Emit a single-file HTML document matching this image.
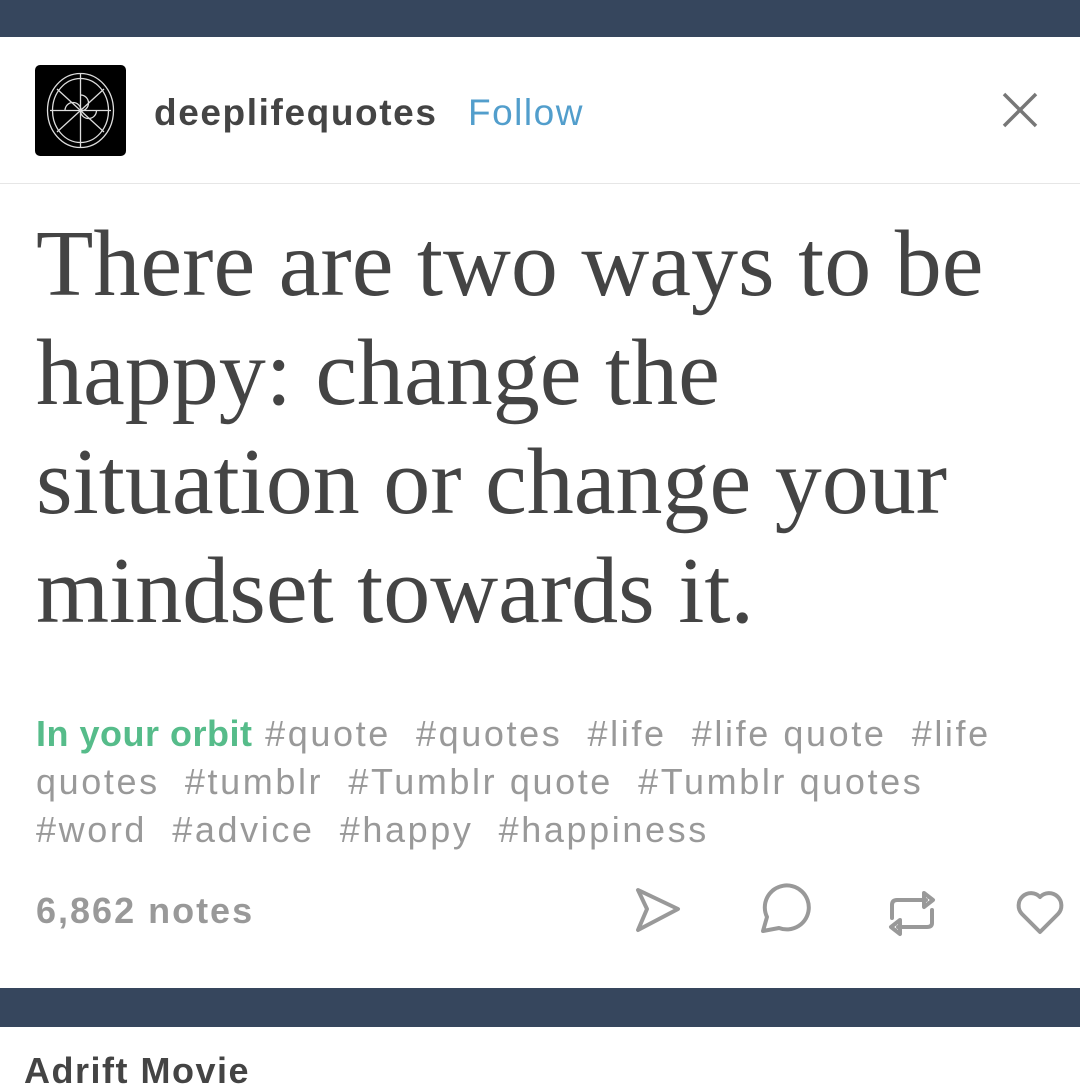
<!DOCTYPE html>
<html><head><meta charset="utf-8"><style>
body{margin:0;width:1080px;height:1080px;overflow:hidden;background:#fff;font-family:"Liberation Sans",sans-serif;position:relative}
.bar{position:absolute;left:0;width:1080px;background:#36465d}
.abs{position:absolute;white-space:nowrap}
</style></head><body>
<div class="bar" style="top:0;height:37px"></div>
<div class="abs" style="left:35px;top:65px;width:91px;height:91px;background:#000;border-radius:5px">
<svg width="91" height="91" viewBox="0 0 91 91" fill="none" stroke="#ddd" stroke-width="1.3">
<ellipse cx="45.5" cy="45.5" rx="33" ry="37"/><ellipse cx="45.5" cy="45.5" rx="28" ry="32"/>
<line x1="45.5" y1="8" x2="45.5" y2="83"/><line x1="15" y1="45.5" x2="76" y2="45.5"/>
<line x1="22" y1="24" x2="69" y2="67"/><line x1="69" y1="24" x2="22" y2="67"/>
<path d="M30 45.5a8 8 0 0 1 16 0M45.5 45.5a8 8 0 0 0 16 0M45.5 30a8 8 0 0 1 0 16"/>
</svg></div>
<div class="abs" style="left:154px;top:92px;font-size:37px;color:#444;font-weight:bold;letter-spacing:1.6px">deeplifequotes</div>
<div class="abs" style="left:468px;top:92px;font-size:37px;color:#529ecc;letter-spacing:1.5px">Follow</div>
<svg class="abs" style="left:1002px;top:92px" width="36" height="36" viewBox="0 0 36 36"><path d="M2 2L34 34M34 2L2 34" stroke="#777" stroke-width="3.5"/></svg>
<div class="abs" style="left:0;top:183px;width:1080px;height:1px;background:#e6e6e6"></div>
<div class="abs" style="left:36px;top:210px;font-family:'Liberation Serif',serif;font-size:94px;line-height:109px;color:#444">There are two ways to be<br>happy: change the<br>situation or change your<br>mindset towards it.</div>
<div class="abs" style="left:36px;top:710px;font-size:36px;line-height:48px;color:#999;letter-spacing:2.6px">
<span style="color:#56bc8a;font-weight:bold;letter-spacing:0.5px">In your orbit</span> #quote&nbsp; #quotes&nbsp; #life&nbsp; #life quote&nbsp; #life<br>quotes&nbsp; #tumblr&nbsp; #Tumblr quote&nbsp; #Tumblr quotes<br>#word&nbsp; #advice&nbsp; #happy&nbsp; #happiness</div>
<div class="abs" style="left:36px;top:890px;font-size:36px;color:#999;font-weight:bold;letter-spacing:2px">6,862 notes</div>
<svg class="abs" style="left:630px;top:883px" width="450" height="60" viewBox="630 883 450 60" fill="none" stroke="#999" stroke-width="4" stroke-linejoin="round" stroke-linecap="round">
<path d="M638 890L678 909L638 930L647 909Z"/>
<path d="M763 931L767 917A22 22 0 1 1 779 928Z"/>
<path d="M892 918V905Q892 900 897 900H926M924 893L933 900L924 907Z M932 910V923Q932 927 927 927H898M900 920L891 927L900 934Z"/>
<path d="M1040 932L1022 914A11 11 0 0 1 1040 897A11 11 0 0 1 1058 914Z"/>
</svg>
<div class="bar" style="top:988px;height:39px"></div>
<div class="abs" style="left:24px;top:1050px;font-size:36px;color:#444;font-weight:bold;letter-spacing:1.5px">Adrift Movie</div>
</body></html>
